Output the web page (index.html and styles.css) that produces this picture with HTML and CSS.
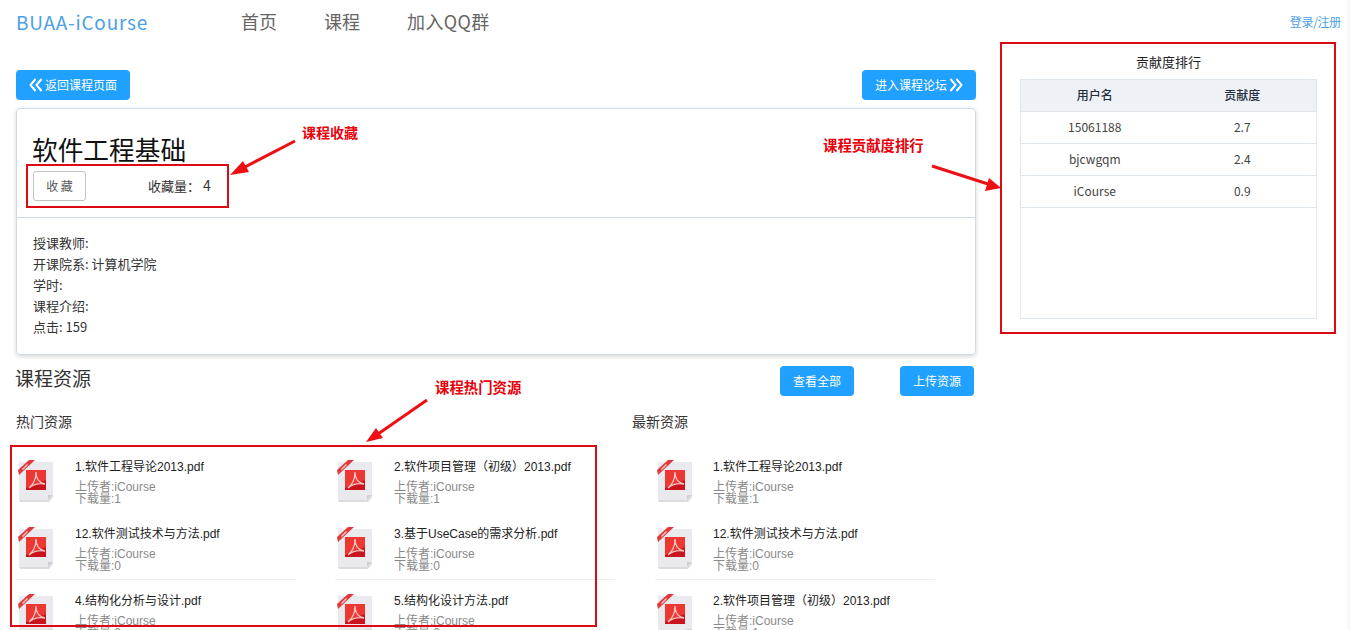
FILE: index.html
```html
<!DOCTYPE html>
<html lang="zh-CN">

<head>
    <meta charset="UTF-8">
    <title>软件工程基础 - BUAA-iCourse</title>
    <link rel="stylesheet" href="styles.css">
</head>

<body>
    <svg class="defs" width="0" height="0">
        <symbol id="pdf" viewBox="0 0 40 44">
            <path d="M3 3H37V36L32 41H3Z" fill="#e9e9ee" />
            <path d="M37 36H32V41Z" fill="#cfcfd4" />
            <path d="M3 41H32L37 36V38L33 43H4Z" fill="#dcdce0" />
            <rect x="10" y="11" width="20" height="20" fill="#c9141d" />
            <path d="M10 11H30V21L10 29Z" fill="#ec3733" />
            <path d="M13 29C18 25 20 19 20 13C20 19 23 24 29 25C23 24 18 25 13 29Z" fill="none" stroke="#f6c6c2" stroke-width="1.3" />
            <path d="M2 11L13 1H19L3 16Z" fill="#e2393c" />
            <path d="M6 10L11 5L12 6L7 11Z" fill="#f6c6c2" />
        </symbol>
        <symbol id="chevrons" viewBox="0 0 14 14">
            <path d="M6.5 1L1.5 7L6.5 13M12.5 1L7.5 7L12.5 13" fill="none" stroke="currentColor" stroke-width="2" />
        </symbol>
    </svg>

    <header class="topbar">
        <a class="brand">BUAA-iCourse</a>
        <nav class="nav">
            <a>首页</a>
            <a>课程</a>
            <a>加入QQ群</a>
        </nav>
        <a class="login">登录/注册</a>
    </header>

    <div class="page">
        <main class="content">
            <div class="actions">
                <a class="btn btn-link"><svg class="chev"><use href="#chevrons" /></svg><span>返回课程页面</span></a>
                <a class="btn btn-link"><span>进入课程论坛</span><svg class="chev flip"><use href="#chevrons" /></svg></a>
            </div>

            <section class="card">
                <div class="card-head">
                    <h1>软件工程基础</h1>
                    <div class="fav-row">
                        <button class="btn-plain">收 藏</button>
                        <span class="fav-count">收藏量： <b>4</b></span>
                    </div>
                </div>
                <div class="card-body">
                    <p>授课教师:</p>
                    <p>开课院系: 计算机学院</p>
                    <p>学时:</p>
                    <p>课程介绍:</p>
                    <p>点击: 159</p>
                </div>
            </section>

            <div class="res-head">
                <h2>课程资源</h2>
                <div class="res-btns">
                    <a class="btn"><span>查看全部</span></a>
                    <a class="btn"><span>上传资源</span></a>
                </div>
            </div>

            <div class="res-cols">
                <section class="res-hot">
                    <h3>热门资源</h3>
                    <ul class="res-list">
                        <li><svg class="pdf"><use href="#pdf" /></svg><div><h4>1.软件工程导论2013.pdf</h4><p>上传者:iCourse</p><p>下载量:1</p></div></li>
                        <li><svg class="pdf"><use href="#pdf" /></svg><div><h4>2.软件项目管理（初级）2013.pdf</h4><p>上传者:iCourse</p><p>下载量:1</p></div></li>
                        <li><svg class="pdf"><use href="#pdf" /></svg><div><h4>12.软件测试技术与方法.pdf</h4><p>上传者:iCourse</p><p>下载量:0</p></div></li>
                        <li><svg class="pdf"><use href="#pdf" /></svg><div><h4>3.基于UseCase的需求分析.pdf</h4><p>上传者:iCourse</p><p>下载量:0</p></div></li>
                        <li class="ruled"><svg class="pdf"><use href="#pdf" /></svg><div><h4>4.结构化分析与设计.pdf</h4><p>上传者:iCourse</p><p>下载量:0</p></div></li>
                        <li class="ruled"><svg class="pdf"><use href="#pdf" /></svg><div><h4>5.结构化设计方法.pdf</h4><p>上传者:iCourse</p><p>下载量:0</p></div></li>
                    </ul>
                </section>
                <section class="res-new">
                    <h3>最新资源</h3>
                    <ul class="res-list single">
                        <li><svg class="pdf"><use href="#pdf" /></svg><div><h4>1.软件工程导论2013.pdf</h4><p>上传者:iCourse</p><p>下载量:1</p></div></li>
                        <li><svg class="pdf"><use href="#pdf" /></svg><div><h4>12.软件测试技术与方法.pdf</h4><p>上传者:iCourse</p><p>下载量:0</p></div></li>
                        <li class="ruled"><svg class="pdf"><use href="#pdf" /></svg><div><h4>2.软件项目管理（初级）2013.pdf</h4><p>上传者:iCourse</p><p>下载量:1</p></div></li>
                    </ul>
                </section>
            </div>
        </main>

        <aside class="rank">
            <div class="rank-title">贡献度排行</div>
            <div class="rank-box">
                <table>
                    <thead>
                        <tr><th>用户名</th><th>贡献度</th></tr>
                    </thead>
                    <tbody>
                        <tr><td>15061188</td><td>2.7</td></tr>
                        <tr><td>bjcwgqm</td><td>2.4</td></tr>
                        <tr><td>iCourse</td><td>0.9</td></tr>
                    </tbody>
                </table>
            </div>
        </aside>
    </div>

    <!-- red notes drawn over the screenshot -->
    <svg class="marks" width="1351" height="630">
        <rect x="27" y="165" width="201" height="42" />
        <rect x="1001" y="43" width="334" height="290" />
        <rect x="11" y="446" width="585" height="180" />
        <line x1="295" y1="141" x2="243" y2="168" />
        <polygon points="230,175 243,161 249,172" />
        <line x1="932" y1="166" x2="988" y2="184" />
        <polygon points="1001,188 985,191 989,178" />
        <line x1="427" y1="400" x2="378" y2="434" />
        <polygon points="366,442 376,428 383,438" />
    </svg>
    <span class="note note-fav">课程收藏</span>
    <span class="note note-rank">课程贡献度排行</span>
    <span class="note note-hot">课程热门资源</span>
</body>

</html>
```

FILE: styles.css
```css
* {
    box-sizing: border-box;
}

html,
body {
    margin: 0;
    height: 630px;
    overflow: hidden;
}

body {
    position: relative;
    border-right: 4px solid #f9f9f9;
    background: #fff;
    color: #333;
    font-family: "Noto Sans CJK SC", "Noto Sans", sans-serif;
    font-size: 13px;
}

h1,
h2,
h3,
h4,
p,
ul {
    margin: 0;
    padding: 0;
    font-weight: normal;
}

.defs {
    position: absolute;
}

.topbar {
    display: flex;
    align-items: center;
    height: 46px;
    padding: 0 6px 4px 16px;
}

.brand {
    width: 225px;
    color: #4b9fe6;
    font-size: 19px;
    letter-spacing: 0.8px;
}

.nav {
    display: flex;
    gap: 47px;
    color: #666;
    font-size: 18px;
}

.nav a:last-child {
    letter-spacing: 0.4px;
}

.login {
    margin-left: auto;
    color: #4b9fe6;
    font-size: 12px;
    letter-spacing: -0.3px;
}

.page {
    display: flex;
    gap: 44px;
    padding-left: 16px;
}

.content {
    width: 960px;
    padding-top: 24px;
}

.actions {
    display: flex;
    justify-content: space-between;
}

.btn {
    display: flex;
    align-items: center;
    justify-content: center;
    width: 74px;
    height: 30px;
    border-radius: 4px;
    background: #20a0ff;
    color: #fff;
    font-size: 12px;
}

.btn span {
    margin-bottom: 2px;
}

.btn-link {
    width: 114px;
    gap: 2px;
}

.chev {
    width: 14px;
    height: 14px;
}

.flip {
    transform: scaleX(-1);
}

.card {
    margin-top: 8px;
    height: 247px;
    border: 1px solid #d1dbe5;
    border-radius: 4px;
    box-shadow: 0 2px 4px rgba(0, 0, 0, .12), 0 0 6px rgba(0, 0, 0, .04);
}

.card-head {
    height: 109px;
    padding: 20px 15px 0;
    border-bottom: 1px solid #d1dbe5;
}

.card-head h1 {
    color: #111;
    font-size: 25.7px;
    line-height: 40px;
}

.fav-row {
    display: flex;
    align-items: center;
    margin: 2px 0 0 1px;
}

.btn-plain {
    width: 53px;
    height: 30px;
    padding: 0 0 2px;
    border: 1px solid #c4c4c4;
    border-radius: 3px;
    background: #fff;
    color: #555;
    font-family: inherit;
    font-size: 12px;
}

.fav-count {
    margin: 0 0 2px 62px;
}

.fav-count b {
    font-weight: normal;
    font-size: 14px;
}

.card-body {
    padding: 14px 16px 0;
    line-height: 21px;
}

.res-head {
    display: flex;
    align-items: flex-start;
    justify-content: space-between;
    height: 30px;
    margin-top: 11px;
    padding-right: 2px;
}

.res-head h2 {
    margin-left: -1px;
    font-size: 19px;
    line-height: 24px;
}

.res-btns {
    display: flex;
    gap: 46px;
}

.res-cols {
    display: flex;
    margin-top: 15px;
}

.res-hot {
    width: 616px;
}

.res-cols h3 {
    font-size: 14px;
    line-height: 20px;
}

.res-list {
    display: grid;
    grid-template-columns: 280px 280px;
    grid-auto-rows: 66.5px;
    column-gap: 39px;
    margin-top: 15px;
    list-style: none;
}

.res-list.single {
    grid-template-columns: 280px;
    margin-left: 23px;
}

.res-list li {
    display: flex;
    align-items: flex-start;
    padding-top: 13px;
    font-family: "Liberation Sans", "Noto Sans CJK SC", sans-serif;
}

.res-list li.ruled {
    border-top: 1px solid #eee;
}

.pdf {
    flex: none;
    width: 40px;
    height: 44px;
    margin: 0 19px 0 0;
}

.single .pdf {
    margin-right: 18px;
}

.res-list h4 {
    color: #222;
    font-size: 12px;
    line-height: 16px;
}

.res-list p {
    color: #8a8a8a;
    font-size: 12px;
    line-height: 12px;
}

.res-list h4+p {
    margin-top: 6px;
}

.rank {
    width: 297px;
    padding-top: 4px;
}

.rank-title {
    height: 29px;
    color: #222;
    font-size: 13px;
    line-height: 24px;
    text-align: center;
}

.rank-box {
    height: 240px;
    border: 1px solid #dfe6ec;
}

.rank-box table {
    width: 100%;
    border-collapse: collapse;
    table-layout: fixed;
    font-size: 12px;
    text-align: center;
}

.rank-box th,
.rank-box td {
    height: 32px;
    padding: 0 0 2px;
    border-bottom: 1px solid #dfe6ec;
}

.rank-box th {
    height: 31px;
    padding-bottom: 1px;
    background: #eef1f6;
    color: #1f2d3d;
    font-weight: 500;
}

.rank-box td {
    color: #444;
}

.marks {
    position: absolute;
    top: 0;
    left: 0;
    pointer-events: none;
}

.marks rect {
    fill: none;
    stroke: #dd0a14;
    stroke-width: 2;
}

.marks line {
    stroke: #ee0f14;
    stroke-width: 3;
}

.marks polygon {
    fill: #ee0f14;
}

.note {
    position: absolute;
    color: #e8000b;
    font-size: 14px;
    font-weight: 700;
    line-height: 18px;
}

.note-fav {
    top: 123px;
    left: 302px;
}

.note-rank {
    top: 136px;
    left: 823px;
    font-size: 14.4px;
}

.note-hot {
    top: 378px;
    left: 435px;
    font-size: 14.4px;
}
```
